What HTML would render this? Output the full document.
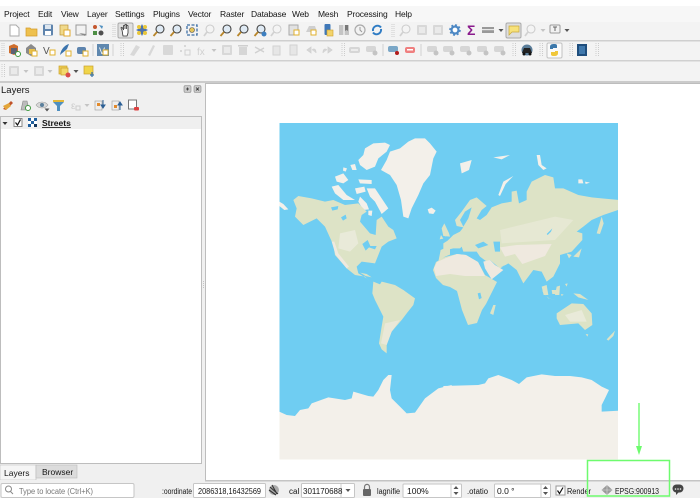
<!DOCTYPE html>
<html><head><meta charset="utf-8"><style>
html,body{margin:0;padding:0;background:#f0f0f0}
svg{display:block;filter:blur(.35px)}
text{font-family:"Liberation Sans",sans-serif;font-size:8.5px;fill:#151515}
</style></head><body>
<svg width="700" height="498" viewBox="0 0 700 498" xmlns="http://www.w3.org/2000/svg">
<defs>
<clipPath id="mc"><rect x="279.500" y="123" width="338.500" height="336.500"/></clipPath>
<g id="ar"><path d="M-2.500-1h5L0 2z" fill="#555"/></g>
<g id="ga"><path d="M-2.500-1h5L0 2z" fill="#c4c4c4"/></g>
<g id="gd"><rect x="-5" y="-5" width="10" height="10" rx="1" fill="#d8d8d8"/><rect x="-3" y="-3" width="6" height="6" fill="#eaeaea"/></g>
<g id="mg"><circle cx="1" cy="-1" r="4" fill="#dfeaf4" stroke="#444" stroke-width="1.100"/><path d="M-2 2l-3.500 4" stroke="#b8862b" stroke-width="1.800"/></g>
<g id="mgg"><circle cx="1" cy="-1" r="4" fill="#f4f4f4" stroke="#cdcdcd" stroke-width="1.100"/><path d="M-2 2l-3 4" stroke="#d2d2d2" stroke-width="1.800"/></g>
<g id="hd"><path d="M0-7v14M2.500-7v14" stroke="#ccc" stroke-dasharray="1 1"/></g>
<g id="lb"><rect x="-6" y="-3" width="11" height="6" rx="2" fill="#d6d6d6"/><rect x="-4" y="-1" width="7" height="2" fill="#ececec"/></g>
<g id="lbs"><rect x="-6" y="-4" width="10" height="6" rx="2" fill="#d6d6d6"/><circle cx="3" cy="3" r="2.500" fill="#c4c4c4"/></g>
</defs>

<!-- top strip / menu -->
<rect width="700" height="6" fill="#fff"/>
<rect y="6" width="700" height="16" fill="#f7f7f7"/>
<g letter-spacing="-.15">
<text x="4" y="17">Project</text><text x="38" y="17">Edit</text><text x="61" y="17">View</text><text x="87" y="17">Layer</text><text x="115" y="17">Settings</text><text x="153" y="17">Plugins</text><text x="188" y="17">Vector</text><text x="220" y="17">Raster</text><text x="251" y="17">Database</text><text x="292" y="17">Web</text><text x="318" y="17">Mesh</text><text x="347" y="17">Processing</text><text x="395" y="17">Help</text>
</g>
<!-- toolbars -->
<rect y="22" width="700" height="60" fill="#f3f3f3"/>
<rect y="40" width="700" height="1.500" fill="#cfcfcf"/>
<rect y="60" width="700" height="1.500" fill="#d0d0d0"/>
<rect y="81" width="700" height="2" fill="#cbcbcb"/>

<!-- row 1 -->
<path d="M10 25h6l3 3v8h-9z" fill="#fff" stroke="#aaa"/>
<path d="M26 28h4l1 1h6v7H26z" fill="#eec04d" stroke="#d39a2a" stroke-width=".7"/>
<g transform="translate(48 30)"><rect x="-5" y="-5.500" width="10" height="11" rx="1" fill="#5f84ad"/><rect x="-3" y="-5" width="6" height="4" fill="#dde6ef"/><rect x="-3" y="1" width="6" height="4" fill="#fff"/></g>
<g transform="translate(65 30)"><rect x="-5" y="-5" width="8" height="10" fill="#f0d98a" stroke="#b9923b" stroke-width=".7"/><rect x="-1" y="0" width="6" height="6" fill="#fff" stroke="#e0a92e"/></g>
<g transform="translate(81 30)"><rect x="-5" y="-5" width="10" height="10" fill="#f2f2f2" stroke="#999"/><path d="M-2 3L4 6l1-2z" fill="#888"/></g>
<g transform="translate(98 30)"><circle cx="-3" cy="-3" r="2" fill="#c4572e"/><rect x="-5" y="1" width="4" height="4" fill="#4e8f45"/><circle cx="3" cy="3" r="2.500" fill="#4f4f4f"/><path d="M1-5l3 4 1-3z" fill="#4f8fc0"/></g>
<path d="M113 24v13M115 24v13" stroke="#ccc" stroke-dasharray="1 1"/>
<rect x="118" y="23" width="15" height="15" rx="1.500" fill="#e0e0e0" stroke="#aaa"/>
<path d="M122 30l-1-2c0-1 1-1 1.500 0l1 2V26c0-1 1.500-1 1.500 0v3-4c0-1 1.500-1 1.500 0v4-3c0-1 1.500-1 1.500 0v7l-1 3h-4z" fill="#fff" stroke="#333" stroke-width=".8"/>
<g transform="translate(142 30)"><path d="M0-6L2-2 6 0 2 2 0 6-2 2-6 0-2-2z" fill="#4e73ad"/><circle cx="-3" cy="-3" r="2" fill="#e8c63a"/><circle cx="3" cy="3" r="2" fill="#e8c63a"/><circle cx="3" cy="-3" r="2" fill="#e8c63a"/><circle cx="-3" cy="3" r="2" fill="#e8c63a"/></g>
<use href="#mg" x="159" y="30"/><use href="#mg" x="176" y="30"/>
<g transform="translate(192 30)"><rect x="-5" y="-5" width="10" height="10" fill="none" stroke="#3c6ea5" stroke-dasharray="3 1.500" stroke-width="1.300"/><circle r="2.500" fill="#e5c55a" stroke="#555" stroke-width=".6"/></g>
<use href="#mgg" x="209" y="30"/><use href="#mg" x="226" y="30"/><use href="#mg" x="243" y="30"/>
<g transform="translate(260 30)"><use href="#mg"/><circle cx="4" cy="4" r="2.500" fill="#3d7fc0"/></g>
<use href="#mgg" x="276" y="30"/>
<g transform="translate(294 30)"><rect x="-5" y="-5" width="9" height="10" fill="#e2e2e2" stroke="#aaa"/><rect x="0" y="0" width="5" height="5" fill="#fff" stroke="#e0b02e"/></g>
<g transform="translate(311 30)"><path d="M-5 2l3-6h6l2 6z" fill="#cfcfcf"/><rect x="0" y="0" width="5" height="5" fill="#fff" stroke="#e0b02e"/></g>
<g transform="translate(328 30)"><rect x="-3.500" y="-6" width="6" height="11" rx="1" fill="#3f78b8"/><rect x="-1" y="0" width="6" height="6" fill="#f3d46b" stroke="#d0a02a" stroke-width=".6"/></g>
<g transform="translate(344 30)"><rect x="-5" y="-5" width="10" height="10" fill="#c4c4c4"/><path d="M0-5v10" stroke="#fff"/><path d="M1-5h3v6l-1.500-1L1 1z" fill="#777"/></g>
<g transform="translate(360 30)"><circle r="5" fill="#f2f2f2" stroke="#aaa" stroke-width="1.200"/><path d="M0-3v3l2 2" stroke="#999" fill="none"/></g>
<g transform="translate(377 30)" fill="none" stroke="#2f7cc4" stroke-width="2"><path d="M-4 1A4.500 4.500 0 0 1 4-2.500"/><path d="M4-1A4.500 4.500 0 0 1-4 2.500"/></g>
<path d="M392 24v13M394 24v13" stroke="#ccc" stroke-dasharray="1 1"/>
<g transform="translate(405 30)"><use href="#mgg"/></g>
<use href="#gd" x="422" y="30"/><use href="#gd" x="438" y="30"/>
<g transform="translate(455 30)"><circle r="3.500" fill="#fff" stroke="#4d88c4" stroke-width="2.200"/><circle r="5" fill="none" stroke="#4d88c4" stroke-width="1.600" stroke-dasharray="2 1.900"/></g>
<text x="467" y="35" style="font-size:14px;font-weight:bold;fill:#8a1a8c">Σ</text>
<g transform="translate(488 30)"><rect x="-6" y="-3" width="12" height="6" fill="#999"/><rect x="-6" y="-1" width="12" height="1.200" fill="#e8e8e8"/></g><use href="#ar" x="501" y="30"/>
<rect x="506" y="23" width="15" height="15" rx="1.500" fill="#dedede" stroke="#aaa"/>
<path d="M509 26h10v6h-7l-3 3z" fill="#f7e27a" stroke="#c9a93a" stroke-width=".7"/>
<use href="#mgg" x="530" y="30"/><use href="#ga" x="543" y="30"/>
<g transform="translate(555 30)"><rect x="-5" y="-5" width="10" height="8" rx="1" fill="#f2f2f2" stroke="#999"/><path d="M-2-3h4M0-3v4" stroke="#666"/></g><use href="#ar" x="567" y="30"/>

<!-- row 2 -->
<path d="M2 43v13M4 43v13" stroke="#ccc" stroke-dasharray="1 1"/>
<g transform="translate(14 50)"><path d="M-5-4l5-2 4 2v7l-4 2-5-2z" fill="#cf6e2d"/><path d="M-3-2h6v6h-6z" fill="#2c5d93" opacity=".7"/><circle cx="4" cy="4" r="2.500" fill="#fff" stroke="#3f9a3f"/></g>
<g transform="translate(31 50)"><path d="M-5-2l5-4 5 4v5l-5 3-5-3z" fill="#8a8a8a"/><path d="M-2-1h6v5h-6z" fill="#e8c04a"/><rect x="1" y="1" width="5" height="5" fill="#fff" stroke="#e0b02e"/></g>
<text x="43" y="54" style="font-size:10px;fill:#555">V</text><rect x="50" y="50" width="5" height="5" fill="#fff" stroke="#e0b02e"/>
<g transform="translate(65 50)"><path d="M-5 5C-4-1 0-5 4-6L2-1C0 1-3 3-5 5z" fill="#3c74ad"/><rect x="1" y="1" width="5" height="5" fill="#fff" stroke="#e0b02e"/></g>
<g transform="translate(82 50)"><rect x="-5" y="-3" width="9" height="7" rx="2" fill="#5d84ae"/><rect x="1" y="1" width="5" height="5" fill="#fff" stroke="#e0b02e"/></g>
<path d="M93 44v12" stroke="#d0d0d0"/>
<rect x="97" y="44" width="12" height="12" fill="#5f88af"/><text x="99" y="54" style="font-size:9px;fill:#fff">V</text><rect x="103" y="50" width="5" height="5" fill="#fff" stroke="#e0b02e"/>
<path d="M113 44v12" stroke="#d0d0d0"/>
<use href="#hd" x="121" y="50"/>
<g fill="#d8d8d8"><path d="M130 55l6-10 4 2-6 9z"/><path d="M148 55l5-10 2 1-5 10z"/><rect x="163" y="45" width="10" height="10" rx="1"/></g>
<g transform="translate(185 50)" fill="#d0d0d0"><circle cx="-4" cy="1" r="1"/><circle cy="-4" r="1"/><rect x="0" y="0" width="5" height="5" fill="none" stroke="#d0d0d0"/></g>
<text x="197" y="55" style="font-size:10px;fill:#d0d0d0">fx</text><use href="#ga" x="214" y="50"/>
<use href="#gd" x="227" y="50"/>
<g transform="translate(243 50)"><rect x="-4" y="-3" width="8" height="8" fill="#d6d6d6"/><rect x="-5" y="-5" width="10" height="1.500" fill="#cfcfcf"/></g>
<path d="M255 47l9 5M255 53l9-5" stroke="#d0d0d0" stroke-width="1.300"/>
<g fill="#e6e6e6" stroke="#d2d2d2"><rect x="273" y="46" width="7" height="9"/><rect x="290" y="45" width="7" height="10"/></g>
<path d="M307 50l4-3v6zM312 50c2-2 4-1 4 3" fill="#d6d6d6" stroke="#d0d0d0" stroke-width=".8"/>
<path d="M332 50l-4-3v6zM327 50c-2-2-4-1-4 3" fill="#d6d6d6" stroke="#d0d0d0" stroke-width=".8"/>
<use href="#hd" x="342" y="50"/>
<use href="#lb" x="355" y="50"/><use href="#lbs" x="372" y="50"/>
<path d="M383 44v12" stroke="#d0d0d0"/>
<g transform="translate(392 50)"><rect x="-4" y="-4" width="10" height="6" rx="2" fill="#7aa7c7"/><circle cx="5" cy="3" r="2" fill="#b21c1c"/></g>
<g transform="translate(410 50)"><rect x="-5" y="-3" width="10" height="6" rx="2" fill="#ef7f7f"/><rect x="-3" y="-1" width="6" height="1.500" fill="#fff"/></g>
<path d="M421 44v12" stroke="#d0d0d0"/>
<use href="#lbs" x="433" y="50"/><use href="#lbs" x="449" y="50"/><use href="#lbs" x="466" y="50"/><use href="#lbs" x="483" y="50"/><use href="#lbs" x="500" y="50"/>
<use href="#hd" x="513" y="50"/>
<g transform="translate(527 50)"><circle r="5.500" fill="#5a7d99"/><path d="M-3-2h6l2 5h-10z" fill="#222"/><circle cx="-3" cy="4" r="1.500" fill="#111"/><circle cx="3" cy="4" r="1.500" fill="#111"/></g>
<use href="#hd" x="540" y="50"/>
<rect x="547" y="43" width="15" height="15" rx="1.500" fill="#fafafa" stroke="#c2c2c2"/>
<g transform="translate(554 50)"><path d="M-4 0v-3c0-2 1-3 4-3s3 1 3 2v2h-4v1h-3z" fill="#3c78aa"/><path d="M4 0v3c0 2-1 3-4 3s-3-1-3-2V2h4V1h3z" fill="#f0c73a"/></g>
<use href="#hd" x="570" y="50"/>
<rect x="577" y="44" width="10" height="12" fill="#1e4d7c"/><rect x="579" y="46" width="6" height="8" fill="#3f78ac"/>
<use href="#hd" x="596" y="50"/>

<!-- row 3 -->
<use href="#hd" x="2" y="71"/>
<use href="#gd" x="14" y="71"/><use href="#ga" x="26" y="71"/>
<use href="#gd" x="39" y="71"/><use href="#ga" x="50" y="71"/>
<g transform="translate(64 71)"><rect x="-5" y="-5" width="8" height="8" fill="#efcf55" stroke="#c9a02c" stroke-width=".7"/><rect x="-3" y="-3" width="7" height="7" fill="#f3d86b" stroke="#c9a02c" stroke-width=".7"/><circle cx="4" cy="4" r="2.500" fill="#d94a4a"/></g><use href="#ar" x="76" y="71"/>
<g transform="translate(89 71)"><rect x="-5" y="-5" width="9" height="8" fill="#f0d54a" stroke="#c9a02c" stroke-width=".7"/><path d="M3 1v5M1 4h4" stroke="#3f78a8" stroke-width="1.300"/></g>

<!-- layers panel -->
<text x="1" y="93" style="font-size:9.500px">Layers</text>
<g fill="#c9c9c9" stroke="#888" stroke-width=".6"><rect x="184" y="85.500" width="7" height="7" rx="1.500"/><rect x="194" y="85.500" width="7" height="7" rx="1.500"/></g>
<path d="M186 89l3 0M187.500 87.500v3M196 87.500l3 3M199 87.500l-3 3" stroke="#333" stroke-width=".8"/>
<g transform="translate(8 105)"><path d="M-5 4L3-4l2 2-7 7z" fill="#c0522a"/><path d="M-5 1l6-3 2 3-5 4z" fill="#e3a53a"/></g>
<g transform="translate(25 105)"><path d="M-4 5l2-9h4l2 9z" fill="#bbb" stroke="#888" stroke-width=".6"/><circle cx="3" cy="3" r="2.500" fill="#fff" stroke="#3f9a3f"/></g>
<g transform="translate(42 105)"><path d="M-6 0C-3-4 3-4 6 0 3 4-3 4-6 0z" fill="#d8d8d8" stroke="#999" stroke-width=".6"/><circle r="2" fill="#5b7f9c"/><use href="#ar" x="5" y="4.500"/></g>
<path d="M53 100h11v2l-4 4v5h-3v-5l-4-4z" fill="#4f8fc0"/><rect x="53" y="100" width="11" height="2" fill="#e3b83a"/>
<text x="71" y="109" style="font-size:10px;fill:#ccc">ε</text><rect x="76" y="106" width="4" height="4" fill="none" stroke="#ccc"/><use href="#ga" x="87" y="105"/>
<g transform="translate(100 105)"><rect x="-5" y="-4" width="7" height="9" fill="#eee" stroke="#999" stroke-width=".6"/><rect x="-3" y="-2" width="3" height="3" fill="#e28a2c"/><path d="M3-5v7M1 0l2 3 2-3z" stroke="#2b5f95" fill="#2b5f95"/></g>
<g transform="translate(117 105)"><rect x="-5" y="-4" width="7" height="9" fill="#eee" stroke="#999" stroke-width=".6"/><rect x="-3" y="0" width="3" height="3" fill="#e28a2c"/><path d="M3 5v-7M1 0l2-3 2 3z" stroke="#2b5f95" fill="#2b5f95"/></g>
<g transform="translate(133 105)"><rect x="-4.500" y="-5" width="8" height="9" fill="#fff" stroke="#777"/><rect x="1" y="2" width="5" height="3.500" rx="1" fill="#dd4040"/></g>

<!-- list -->
<rect x=".5" y="116.500" width="201" height="347" fill="#fff" stroke="#bdbdbd"/>
<rect x="1" y="117" width="200" height="12" fill="#efefef"/>
<path d="M2.500 122h5L5 125z" fill="#333"/>
<rect x="14" y="118.500" width="8" height="8" fill="#fff" stroke="#888"/><path d="M15.500 122.500l2 2.500 3-5.500" fill="none" stroke="#111" stroke-width="1.200"/>
<rect x="28" y="118" width="9" height="9" fill="#fff"/><g fill="#1f5f9e"><rect x="28" y="118" width="3" height="3"/><rect x="34" y="118" width="3" height="3"/><rect x="31" y="121" width="3" height="3"/><rect x="28" y="124" width="3" height="3"/><rect x="34" y="124" width="3" height="3" fill="#12375e"/></g>
<text x="42" y="126" style="font-weight:bold;font-size:8.500px;text-decoration:underline">Streets</text>

<!-- canvas -->
<rect x="205.500" y="83.500" width="495" height="397" fill="#fff" stroke="#bdbdbd"/>
<path d="M203.500 281v8" stroke="#c4c4c4" stroke-dasharray="1 1"/>

<!-- map -->
<g clip-path="url(#mc)">
<rect x="279.500" y="123" width="338.500" height="336.500" fill="#6fcdf2"/>

<!-- north-west quadrant -->
<g transform="translate(275 120) scale(.33333)">
<g fill="#f3f0ea">
<path d="M318 150L335 120 345 95 375 85 400 65 420 55 450 55 465 70 485 95 475 115 465 165 445 190 430 225 410 265 400 295 385 290 378 240 365 195 345 165z"/>
<path d="M250 120L265 105 270 85 295 70 330 68 345 75 335 95 310 115 300 140 275 150 255 135z"/>
<path d="M180 170L205 160 220 180 205 190 185 185zM170 200L190 195 215 225 240 240 205 240 180 220z"/>
<path d="M240 205L268 200 272 215 245 222zM250 178L290 180 290 192 255 190zM226 135L240 132 245 150 232 150zM205 142L216 145 212 155 204 152z"/>
<path d="M275 205L300 205 320 235 340 265 320 282 300 245 285 230zM255 230L275 250 282 268 265 270 250 245zM280 272L292 272 290 288 280 285z"/>
<path d="M458 268L470 263 482 272 475 282 462 280z"/>
<path d="M13 245L25 252 40 268 28 270 13 258z"/>
</g>
<path fill="#dde3c6" d="M55 240L70 228 110 235 150 245 175 240 210 255 250 250 275 275 260 285 255 305 285 340 302 345 305 300 320 290 340 320 355 330 365 355 340 365 320 380 310 405 300 430 260 425 245 440 250 460 275 475 290 490 270 470 240 465 215 445 180 405 175 375 150 320 125 295 85 315 70 300 60 290 65 265z"/>
<path fill="#e9ead9" d="M195 340L240 330 250 370 225 395 190 385z"/>
<path fill="#efe9df" d="M170 365L182 405 215 445 222 440 190 400 178 365z"/>
<g fill="#6fcdf2"><path d="M168 262L190 258 188 268 172 272zM198 292L212 284 215 295 204 302zM262 372L278 360 286 378 305 378 300 388 282 382 272 392z"/></g>
<path fill="#dde3c6" d="M255 458L275 462 290 472 272 468zM295 525L320 485 360 495 385 510 400 525z"/>
<path fill="#dde3c6" d="M500 325L508 310 522 340 525 350 505 348zM498 345L494 358 505 356z"/>
<path fill="#dde3c6" d="M490 425L497 390 525 378 525 404 510 410z"/>
</g>

<!-- Eurasia -->
<g transform="translate(445 120) scale(.33333)">
<g fill="#f3f0ea">
<path d="M160 225L175 185 205 168 182 192 165 228zM45 130L80 120 72 150 50 160zM145 112L195 105 170 118zM275 105L285 105 290 135 305 145 295 150 280 135zM400 178L412 178 415 190 400 190zM420 185L435 188 422 192z"/>
</g>
<path fill="#dde3c6" d="M-5 370L8 362 25 345 45 335 55 322 35 318 30 300 50 275 75 240 95 232 125 258 110 270 95 295 105 300 125 285 140 262 170 250 200 245 200 215 215 212 222 250 245 240 245 215 260 185 300 165 325 172 330 205 355 205 400 225 440 232 470 235 525 240 525 268 475 285 440 300 415 320 395 335 412 340 412 360 380 395 345 405 345 430 325 470 305 485 290 455 265 450 235 490 215 450 190 430 165 445 135 420 125 425 105 410 95 395 55 395 50 380 45 385 25 385 5 390-5 392z"/>
<path fill="#e9ead9" d="M165 330L330 290 385 300 330 360 170 370z" opacity=".7"/>
<path fill="#efe9df" d="M165 382L215 375 320 372 300 408 232 432 210 402 180 410z"/>
<path fill="#efe9df" d="M115 425L135 420 150 435 175 450 140 478 120 445z"/>
<path fill="#dde3c6" d="M455 340L470 290 476 310 465 342zM385 410L410 385 402 412zM0 315L12 340 0 350zM365 400L380 405 372 415z"/>
<g fill="#6fcdf2">
<path d="M90 375L115 365 130 375 100 385zM145 365L165 365 165 395 150 395zM305 342L322 325 318 335 308 345zM168 440L192 432 188 438z"/>
<path d="M45 300L60 275 80 262 70 295 55 320z"/>
</g>
<g fill="#dde3c6"><path d="M290 500L305 495 310 525 296 525zM335 500L345 497 343 525 330 525zM360 492L368 490 365 500z"/></g>
</g>

<!-- Africa -->
<path fill="#dde3c6" d="M433 270L436 262 445 257 457 254 466 255 478 262 485 275 497 282 491 294 486 304 482 310 477 323 468 325 462 310 457 291 450 287 443 285 436 278z"/>
<path fill="#efe9df" d="M434 268L437 262 446 258 457 254 466 255 478 262 485 276 465 276 450 274 436 276z"/>

<!-- South America and Antarctica -->
<g transform="translate(275 290) scale(.33333)">
<path fill="#dde3c6" d="M295 -25L320 -15 360 -5 385 0 420 25 415 45 395 70 380 90 350 125 335 165 335 190 320 178 312 160 320 110 325 80 300 30 292 10z"/>
<path fill="#efe9df" d="M330 100L375 90 350 125 335 165 318 160z" opacity=".7"/>
<path fill="#f3f0ea" d="M13 365L35 375 60 378 75 360 100 355 110 340 160 322 210 330 230 325 235 305 280 318 295 320 310 300 325 270 340 255 350 255 345 300 350 325 375 350 395 370 420 368 450 325 490 295 530 285V515H13z"/>
</g>

<!-- SE quadrant -->
<g transform="translate(445 290) scale(.33333)">
<g fill="#dde3c6">
<path d="M135 70L145 45 152 45 145 75z"/>
<path d="M335 70L380 40 415 42 440 70 442 105 420 120 400 100 345 105 335 85z"/>
<path d="M422 132L430 133 427 140zM485 148L510 122 505 138 490 152z"/>
<path d="M290 0L310 25 330 30 312 25 296 10zM320 0H340L338 12H322zM385 10L405 12 430 30 400 22zM348 12L356 14 350 18z"/>
</g>
<path fill="#6fcdf2" d="M98 10L106 8 110 24 102 28z"/>
<path fill="#e9ead9" d="M360 75L410 60 425 95 375 95z"/>
<path fill="#f3f0ea" d="M-5 288L100 285 120 280 130 265 160 255 200 270 222 282 245 262 290 253 330 258 375 258 410 262 440 270 470 290 492 300 480 325 470 345 470 365 525 362V515H-5z"/>
</g>
</g>

<!-- tabs -->
<path d="M0 480v-15h36v15z" fill="#f5f5f5" stroke="#bbb" stroke-width=".6"/>
<rect x="36" y="465" width="41" height="13" fill="#dcdcdc" stroke="#bbb" stroke-width=".6"/>
<text x="4" y="476">Layers</text><text x="42" y="475">Browser</text>

<!-- status -->
<rect x="0" y="480" width="700" height="18" fill="#f0f0f0"/>
<rect x="205" y="480" width="495" height="1.500" fill="#c4c4c4"/>
<rect x="1" y="483.500" width="133" height="14" rx="1.500" fill="#fff" stroke="#c6c6c6"/>
<circle cx="8.500" cy="489" r="3" fill="none" stroke="#888"/><path d="M10.500 491.500l2.500 2.500" stroke="#888"/>
<text x="19" y="494" textLength="74" lengthAdjust="spacingAndGlyphs" style="fill:#777;font-size:8px">Type to locate (Ctrl+K)</text>
<text x="162" y="494" textLength="30" lengthAdjust="spacingAndGlyphs" style="font-size:8px">:oordinate</text>
<rect x="193.500" y="483.500" width="72" height="14" rx="1" fill="#fff" stroke="#c6c6c6"/>
<text x="198" y="494" textLength="63" lengthAdjust="spacingAndGlyphs" style="font-size:8px">2086318,16432569</text>
<g transform="translate(274 490)"><circle r="5" fill="#aaa"/><path d="M-4-3l8 7M-2-5l5 9M-5 0l7 5" stroke="#333" stroke-width="1.100"/></g>
<text x="289" y="494" style="font-size:8px">cal</text>
<rect x="301.500" y="483.500" width="53" height="14" rx="1" fill="#fff" stroke="#c6c6c6"/>
<path d="M341 484v13" stroke="#ccc"/>
<text x="303" y="494" style="font-size:8px">301170688</text><use href="#ar" x="348" y="490"/>
<g transform="translate(367 490)"><path d="M-2.500-1v-2c0-3.500 5-3.500 5 0v2" fill="none" stroke="#777" stroke-width="1.200"/><rect x="-4" y="-1" width="8" height="7" rx="1" fill="#666"/></g>
<text x="377" y="494" textLength="23" lengthAdjust="spacingAndGlyphs" style="font-size:8px">lagnifie</text>
<rect x="403" y="484" width="58.500" height="13.500" rx="1" fill="#fff" stroke="#c6c6c6"/>
<path d="M451 484v13" stroke="#ccc"/><path d="M453.500 489l2.500-3 2.500 3zM453.500 492l2.500 3 2.500-3z" fill="#555"/>
<text x="407" y="494" style="font-size:8.500px">100%</text>
<text x="467" y="494" textLength="21" lengthAdjust="spacingAndGlyphs" style="font-size:8px">.otatio</text>
<rect x="494.500" y="484" width="56" height="13.500" rx="1" fill="#fff" stroke="#c6c6c6"/>
<path d="M541 484v13" stroke="#ccc"/><path d="M543 489l2.500-3 2.500 3zM543 492l2.500 3 2.500-3z" fill="#555"/>
<text x="497" y="494" style="font-size:8.500px">0.0 °</text>
<rect x="556" y="486" width="9" height="9" fill="#fff" stroke="#999"/><path d="M557.500 490.500l2 3 3.500-6" fill="none" stroke="#111" stroke-width="1.200"/>
<text x="567" y="494" textLength="24" lengthAdjust="spacingAndGlyphs" style="font-size:8.500px">Render</text>
<g transform="translate(607 490)"><path d="M-5.500 0L0-5 5.500 0 0 5z" fill="#999"/><path d="M-5 0h10M0-5v10" stroke="#ddd" stroke-width=".6"/></g>
<text x="615" y="494" textLength="44" lengthAdjust="spacingAndGlyphs" style="font-size:8.500px">EPSG:900913</text>
<g transform="translate(678 489)"><rect x="-5.500" y="-4.500" width="11" height="8" rx="4" fill="#444"/><path d="M-2 3v3l3-3z" fill="#444"/><g fill="#eee"><circle cx="-2.500" r=".8"/><circle r=".8"/><circle cx="2.500" r=".8"/></g></g>

<!-- annotation -->
<rect x="587.500" y="460.500" width="82" height="35.500" fill="none" stroke="#6efb6e" stroke-width="1.500"/>
<path d="M639 403v44" stroke="#6efb6e" stroke-width="1.400"/>
<path d="M636 446h6l-3 9z" fill="#6efb6e"/>
</svg>
</body></html>
